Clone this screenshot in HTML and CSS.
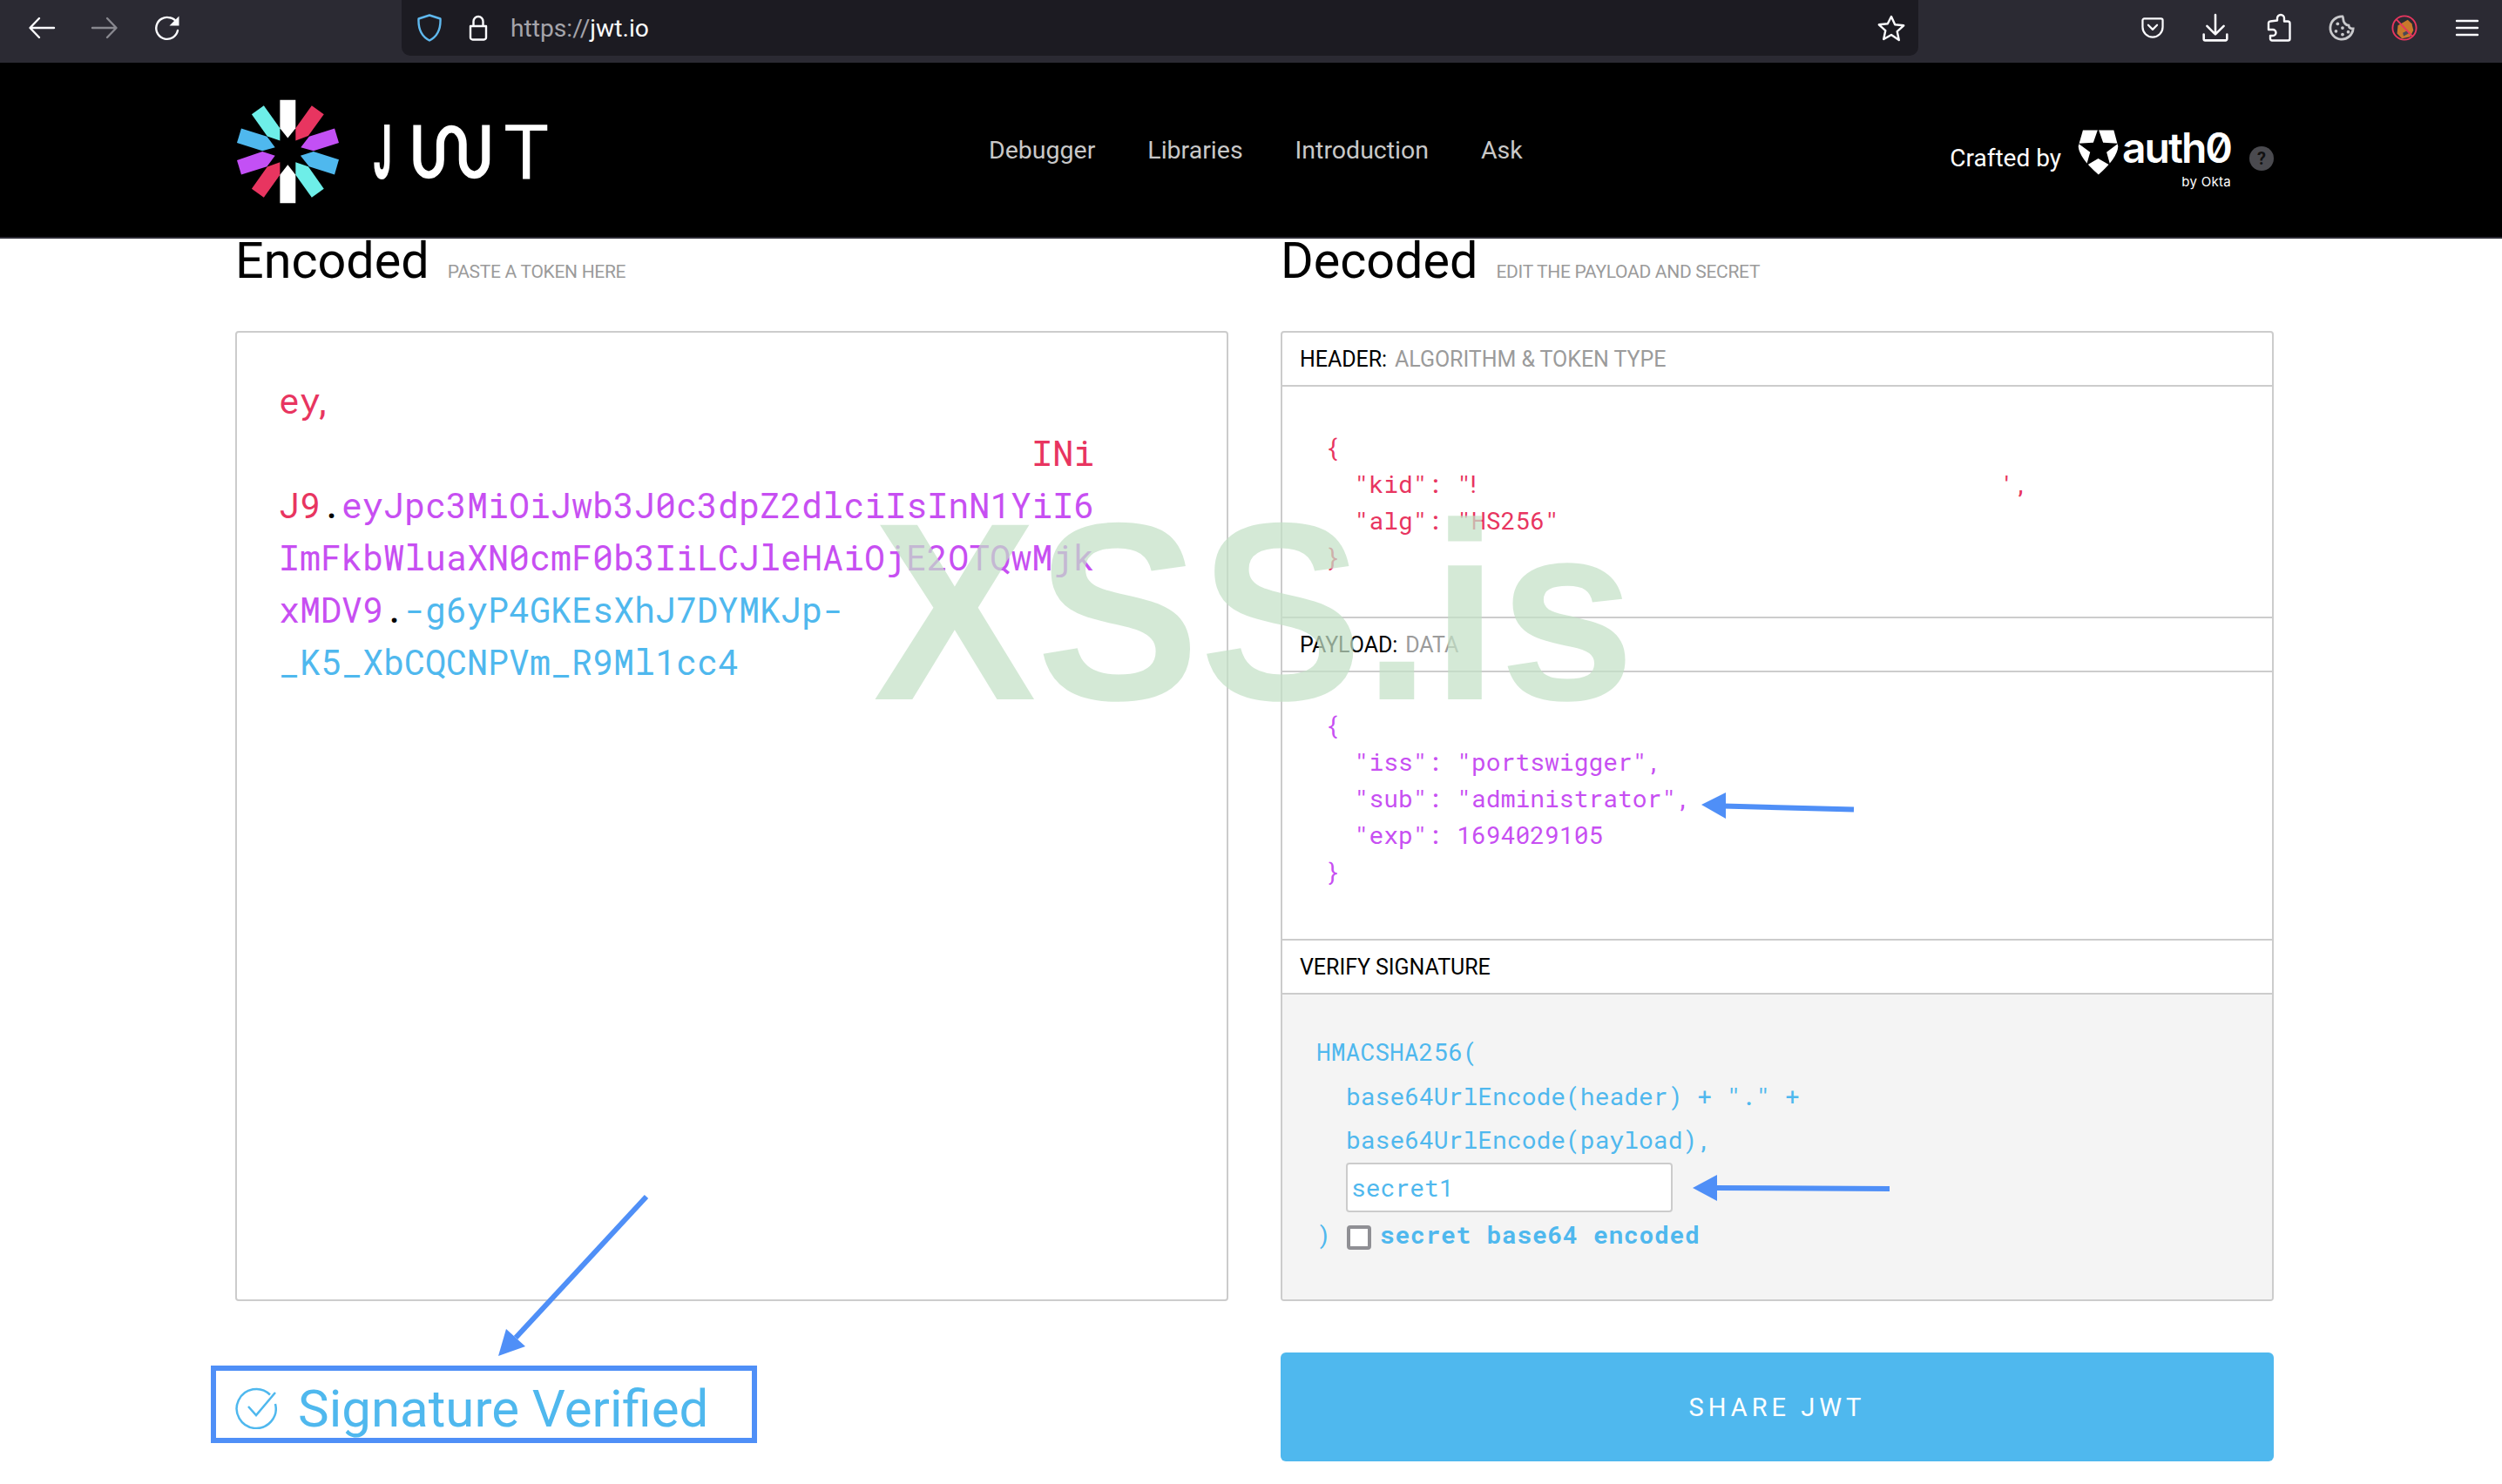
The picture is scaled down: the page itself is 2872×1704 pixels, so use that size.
FILE: index.html
```html
<!DOCTYPE html>
<html lang="en">
<head>
<meta charset="utf-8">
<title>JWT.IO</title>
<link rel="stylesheet" href="styles.css">
</head>
<body>
<header class="toolbar">
  <svg class="tb-icon" viewBox="0 0 30 24"><path class="st" d="M29 12H2M12 1 1.500 12 12 23"/></svg>
  <svg class="tb-icon dim" viewBox="0 0 30 24"><path class="st" d="M1 12h27M18 1l10.500 11L18 23"/></svg>
  <svg class="tb-icon tall" viewBox="0 0 30 30"><path class="st" d="M27 18A12.500 12.500 0 1 1 18 3.300C22 4 25 6.500 26.500 10"/><path class="fl" d="M28.500 1.500v11h-11z"/></svg>
  <div class="urlbar">
    <svg class="u-shield" viewBox="0 0 28 32"><path class="st-blue" d="M14 1.500 26.500 5.500C27 17 23 26 14 30.500 5 26 1 17 1.500 5.500Z"/></svg>
    <svg class="u-lock" viewBox="0 0 22 30"><path class="st" d="M2 13h18v13a2.500 2.500 0 0 1-2.500 2.500h-13A2.500 2.500 0 0 1 2 26ZM5.500 13V7.500a5.500 5.500 0 0 1 11 0V13"/></svg>
    <span class="url"><span class="url-dim">https://</span>jwt.io</span>
    <svg class="u-star" viewBox="0 0 32 31"><path class="st" d="M16 2l4.200 9.200 10 1.100-7.500 6.800 2.100 9.900L16 23l-8.800 5 2.100-9.900-7.500-6.800 10-1.100Z"/></svg>
  </div>
  <div class="tb-right">
    <svg class="tb-icon" viewBox="0 0 28 26"><path class="st" d="M3.500 1.500h21a2 2 0 0 1 2 2V12a12.500 12.500 0 0 1-25 0V3.500a2 2 0 0 1 2-2ZM8.500 9.500 14 15l5.500-5.500"/></svg>
    <svg class="tb-icon tall" viewBox="0 0 28 30"><path class="st" d="M14 1v20M5 13l9 9 9-9M1.500 22v5a1.500 1.500 0 0 0 1.500 1.500h22a1.500 1.500 0 0 0 1.500-1.500v-5"/></svg>
    <svg class="tb-icon tall" viewBox="0 0 28 32"><path class="st" d="M12 7.500V5a4 4 0 0 1 8 0v3.500h4a2.500 2.500 0 0 1 2.500 2.500v17.500a2 2 0 0 1-2 2H6a2 2 0 0 1-2-2V25h3a3.500 3.500 0 0 0 0-7H2v-7.500a2 2 0 0 1 2-2Z"/></svg>
    <svg class="tb-icon tall" viewBox="0 0 32 32"><path class="st-grey" d="M17 2A14 14 0 1 0 30 17c-3 0-5-1-5.500-4C21 13 18 9 18 6c0-1.500-.5-3-1-4Z"/><circle class="fl-grey" cx="11" cy="11" r="2"/><circle class="fl-grey" cx="9" cy="20" r="2"/><circle class="fl-grey" cx="17" cy="24" r="2"/><circle class="fl-grey" cx="17" cy="16" r="2"/><circle class="fl-grey" cx="24" cy="21" r="2"/></svg>
    <svg class="tb-icon tall" viewBox="0 0 32 32"><path class="fox" d="M8 13 20 6l5 5 2 8-4 8-10 2-6-6Z"/><path class="fox-dark" d="M14 22l6-3 1 4-6 3Z"/><circle class="ring" cx="16" cy="16" r="14.500"/><path class="ring" d="M6 5.500 26 26.500"/></svg>
    <svg class="tb-icon burger" viewBox="0 0 24 20"><path class="st" d="M0 2h24M0 10h24M0 18h24"/></svg>
  </div>
</header>

<nav class="navbar">
  <svg class="logo" viewBox="90 70 1080 362" role="img" aria-label="JWT">
    <polygon class="c-white" points="242,72 296,72 296,170 269,204 242,170"/>
    <polygon class="c-red" points="352,92 394,122 340,197 296,213 296,170"/>
    <polygon class="c-purple" points="343,199 431,171 446,221 358,249 314,237"/>
    <polygon class="c-blue" points="358,251 446,279 431,331 343,303 313,265"/>
    <polygon class="c-cyan" points="296,288 340,303 394,380 352,410 296,332"/>
    <polygon class="c-white" points="269,297 296,332 296,430 242,430 242,332"/>
    <polygon class="c-red" points="242,288 242,332 186,410 144,380 198,304"/>
    <polygon class="c-purple" points="181,251 225,265 197,303 108,331 93,281"/>
    <polygon class="c-blue" points="108,171 197,199 225,237 181,249 93,221"/>
    <polygon class="c-cyan" points="186,92 242,170 242,213 198,198 144,122"/>
    <text class="logo-j" x="566" y="346" textLength="62" lengthAdjust="spacingAndGlyphs">J</text>
    <path class="logo-wave" d="M717 159V280A40 52 0 0 0 797 280V225A39 52 0 0 1 875 225V280A40 52 0 0 0 955 280V159"/>
    <text class="logo-txt" x="1016" y="346">T</text>
  </svg>
  <div class="links">
    <span>Debugger</span><span>Libraries</span><span>Introduction</span><span>Ask</span>
  </div>
  <div class="crafted">
    <span class="crafted-by">Crafted by</span>
    <svg class="a0-shield" viewBox="560 82 142 158"><path class="a0-w" d="M578 84H685L700 140Q697 182 632 238 566 182 562 140Z"/><path class="a0-k" d="M631 78 648 127 700 130 660 160 673 206 631 182 590 206 603 160 562 130 614 127Z"/></svg>
    <div class="a0-text">
      <span class="a0-name">auth0</span>
      <span class="a0-okta">by Okta</span>
    </div>
    <span class="a0-help">?</span>
  </div>
</nav>

<main class="page">
  <section class="col">
    <h2 class="heading">Encoded<small>PASTE A TOKEN HERE</small></h2>
    <div class="panel encoded">
      <div class="tok-line red">ey<span class="frag">,</span></div>
      <div class="tok-line red"><span class="pad-36"></span>INi</div>
      <div class="tok-line"><span class="red">J9</span>.<span class="purple">eyJpc3MiOiJwb3J0c3dpZ2dlciIsInN1YiI6</span></div>
      <div class="tok-line purple">ImFkbWluaXN0cmF0b3IiLCJleHAiOjE2OTQwMjk</div>
      <div class="tok-line"><span class="purple">xMDV9</span>.<span class="blue">-g6yP4GKEsXhJ7DYMKJp-</span></div>
      <div class="tok-line blue">_K5_XbCQCNPVm_R9Ml1cc4</div>
    </div>
    <div class="status">
      <svg class="check" viewBox="0 0 48 48"><path class="check-st" d="M40 8.500A22.500 22.500 0 1 0 46 19"/><path class="check-st" d="M15 22l9 10L46 6"/></svg>
      <span>Signature Verified</span>
    </div>
  </section>
  <section class="col">
    <h2 class="heading">Decoded<small>EDIT THE PAYLOAD AND SECRET</small></h2>
    <div class="panel decoded">
      <div class="p-head first">HEADER:<span>ALGORITHM &amp; TOKEN TYPE</span></div>
      <pre class="code code-h red">{
  "kid": "<span class="bang">!</span><span class="pad-kid"></span>',
  "alg": "HS256"
}</pre>
      <div class="p-head line-top">PAYLOAD:<span>DATA</span></div>
      <pre class="code code-p purple">{
  "iss": "portswigger",
  "sub": "administrator",
  "exp": 1694029105
}</pre>
      <div class="p-head line-top">VERIFY SIGNATURE</div>
      <div class="verify blue">
        <div class="v-line">HMACSHA256(</div>
        <div class="v-line v-ind">base64UrlEncode(header) + "." +</div>
        <div class="v-line v-ind">base64UrlEncode(payload),</div>
        <input class="secret" type="text" value="secret1">
        <div class="v-last"><span class="paren">)</span><span class="box"></span><b>secret base64 encoded</b></div>
      </div>
    </div>
    <button class="share">SHARE JWT</button>
  </section>
</main>

<div class="watermark">XSS.is</div>

<svg class="notes" viewBox="0 0 2872 1704">
  <rect class="note-box" x="245" y="1571" width="621" height="83"/>
  <path class="note-line" d="M742 1374 592 1536"/>
  <polygon class="note-fill" points="572,1557 581,1526 603,1546"/>
  <path class="note-line" d="M1978 925.500 2128 929.500"/>
  <polygon class="note-fill" points="1953,924 1981,910 1981,940"/>
  <path class="note-line" d="M1968 1364 2169 1365"/>
  <polygon class="note-fill" points="1943,1364 1971,1349 1971,1379"/>
</svg>
</body>
</html>
```

FILE: styles.css
```css
* { box-sizing: border-box; }
html, body { margin: 0; padding: 0; }
body {
  width: 2872px;
  height: 1704px;
  overflow: hidden;
  position: relative;
  background: #fff;
  font-family: Roboto, "Liberation Sans", sans-serif;
  color: #000;
}

/* browser chrome */
.toolbar {
  height: 72px;
  background: #2b2a33;
  display: flex;
  align-items: center;
  padding: 0 0 8px 33px;
  gap: 42px;
}
.tb-icon { width: 30px; height: 24px; flex: none; overflow: visible; }
.tb-icon.tall { height: 32px; }
.tb-icon.dim { opacity: .45; }
.tb-icon.burger { width: 24px; height: 20px; margin-left: 3px; }
.st { fill: none; stroke: #fbfbfe; stroke-width: 2.4; stroke-linecap: round; stroke-linejoin: round; }
.fl { fill: #fbfbfe; }
.st-blue { fill: none; stroke: #5fb8ee; stroke-width: 2.4; stroke-linejoin: round; }
.st-grey { fill: none; stroke: #c9c9cc; stroke-width: 3; }
.fl-grey { fill: #c9c9cc; }
.fox { fill: #c9792b; }
.fox-dark { fill: #4a4a55; }
.ring { fill: none; stroke: #e8365f; stroke-width: 2; }

.urlbar {
  width: 1741px;
  height: 64px;
  margin-left: 212px;
  background: #1c1b22;
  border-radius: 0 0 10px 10px;
  display: flex;
  align-items: center;
  padding: 0 15px 0 18px;
  flex: none;
}
.u-shield { width: 28px; height: 32px; flex: none; }
.u-lock { width: 22px; height: 30px; margin-left: 31px; flex: none; }
.url { margin-left: 26px; font-size: 28.200px; color: #fbfbfe; }
.url-dim { color: #a5a4ab; }
.u-star { width: 32px; height: 31px; margin-left: auto; flex: none; }
.tb-right {
  display: flex;
  align-items: center;
  gap: 42.300px;
  margin-left: 212px;
}

/* site nav */
.navbar {
  height: 202px;
  background: #000;
  border-bottom: 2px solid #2b2a33;
  display: flex;
  align-items: center;
  padding: 0 262px 0 270px;
}
.logo { width: 360px; height: 120px; flex: none; margin-top: 3px; }
.c-white { fill: #fff; }
.c-red { fill: #e83560; }
.c-purple { fill: #c350f5; }
.c-blue { fill: #4fb8ee; }
.c-cyan { fill: #6eeee8; }
.logo-txt { font-family: Roboto, sans-serif; font-size: 264px; fill: #fff; }
.logo-j { font-family: Roboto, sans-serif; font-size: 264px; font-weight: 900; fill: #fff; }
.logo-wave { fill: none; stroke: #fff; stroke-width: 27; }
.links {
  display: flex;
  gap: 60px;
  margin-left: 505px;
  font-size: 28.500px;
  color: #c8c8c8;
}
.crafted {
  margin-left: auto;
  display: flex;
  align-items: center;
  color: #fff;
}
.crafted-by { font-size: 28px; margin-top: 18px; }
.a0-shield { width: 47px; height: 54px; margin-left: 19px; flex: none; margin-top: 6px; }
.a0-w { fill: #fff; }
.a0-k { fill: #000; }
.a0-text {
  display: flex;
  flex-direction: column;
  align-items: flex-end;
  margin-left: 4px;
  margin-top: 20px;
  font-family: Inter, Roboto, sans-serif;
}
.a0-name {
  font-size: 48px;
  line-height: 48px;
  font-weight: 600;
  letter-spacing: -2px;
  font-feature-settings: "zero" 1;
}
.a0-okta { font-size: 15px; line-height: 18px; letter-spacing: .3px; margin-top: 6px; }
.a0-help {
  width: 28px;
  height: 28px;
  border-radius: 50%;
  background: #4a4a4f;
  color: #111;
  font-size: 20px;
  font-weight: 700;
  display: flex;
  align-items: center;
  justify-content: center;
  margin-left: 21px;
  margin-top: 20px;
}

/* main columns */
.page {
  display: grid;
  grid-template-columns: 1140px 1140px;
  gap: 60px;
  padding-left: 270px;
}
.col { display: flex; flex-direction: column; }
.heading {
  height: 106px;
  margin: 0;
  font-size: 57.500px;
  line-height: 52px;
  font-weight: 400;
}
.heading small {
  margin-left: 21px;
  font-size: 21px;
  color: #9b9b9b;
  letter-spacing: -.3px;
}
.panel {
  height: 1114px;
  border: 2px solid #ccc;
  border-radius: 4px;
  background: transparent;
}
.red { color: #e83560; }
.purple { color: #c74ff2; }
.blue { color: #4fb8ee; }

.encoded {
  padding: 48px 48px;
  font-family: "Roboto Mono", "DejaVu Sans Mono", monospace;
  font-size: 40px;
  line-height: 60px;
  font-weight: 450;
}
.tok-line { white-space: pre; height: 60px; }
.frag { margin-left: -8px; }
.pad-36 { display: inline-block; width: 36ch; }

.status {
  margin-top: 78px;
  display: flex;
  align-items: center;
  height: 90px;
  font-size: 60px;
  color: #4fb8ee;
}
.check { width: 48px; height: 48px; margin-right: 24px; flex: none; }
.check-st { fill: none; stroke: #4fb8ee; stroke-width: 2.500; }

.decoded { display: flex; flex-direction: column; overflow: hidden; }
.p-head {
  height: 60px;
  display: flex;
  align-items: center;
  padding-left: 20px;
  font-size: 25px;
  letter-spacing: -.05px;
  flex: none;
  border-bottom: 2px solid #ccc;
}
.p-head.first { height: 62px; }
.p-head span { margin-left: 9px; color: #9b9b9b; }
.line-top { height: 64px; border-top: 2px solid #ccc; }
.code {
  margin: 0;
  padding-left: 49px;
  font-family: "Roboto Mono", "DejaVu Sans Mono", monospace;
  font-size: 28px;
  line-height: 42px;
  font-weight: 450;
}
.code-h { height: 264px; padding-top: 49px; }
.code-p { height: 306px; padding-top: 40px; }
.bang { margin-left: -6px; }
.pad-kid { display: inline-block; width: 35.450ch; }

.verify {
  flex: 1;
  background: #f4f4f4;
  padding: 41px 0 0 39px;
  font-family: "Roboto Mono", "DejaVu Sans Mono", monospace;
  font-size: 28px;
  font-weight: 450;
}
.v-line { height: 50.500px; line-height: 50px; white-space: pre; }
.v-ind { padding-left: 34px; }
.secret {
  display: block;
  width: 375px;
  height: 57px;
  margin: 0 0 0 34px;
  padding: 0 4px;
  background: #fff;
  border: 2px solid #ccc;
  border-radius: 4px;
  font: inherit;
  color: #4fb8ee;
}
.v-last { display: flex; align-items: center; height: 52px; white-space: pre; }
.paren { width: 35px; }
.box {
  width: 28px;
  height: 28px;
  background: #fff;
  border: 4px solid #8f8f94;
  border-radius: 4px;
  margin-top: 6px;
  margin-right: 10px;
}
.v-last b { font-weight: 700; letter-spacing: .7px; }

.share {
  margin-top: 59px;
  height: 125px;
  border: 0;
  border-radius: 6px;
  background: #4fb8ee;
  color: #fff;
  font-family: Roboto, sans-serif;
  font-size: 29px;
  letter-spacing: 5px;
}

/* overlays */
.watermark {
  position: absolute;
  left: 1002px;
  top: 543px;
  font-family: "Liberation Sans", Arial, sans-serif;
  font-weight: 700;
  font-size: 291px;
  line-height: 320px;
  white-space: nowrap;
  color: rgba(195, 224, 198, .72);
  transform: scaleX(.966);
  transform-origin: left center;
}
.notes { position: absolute; left: 0; top: 0; width: 2872px; height: 1704px; }
.note-box { fill: none; stroke: #4f8ff7; stroke-width: 6; }
.note-line { fill: none; stroke: #4f8ff7; stroke-width: 6; }
.note-fill { fill: #4f8ff7; }
```
